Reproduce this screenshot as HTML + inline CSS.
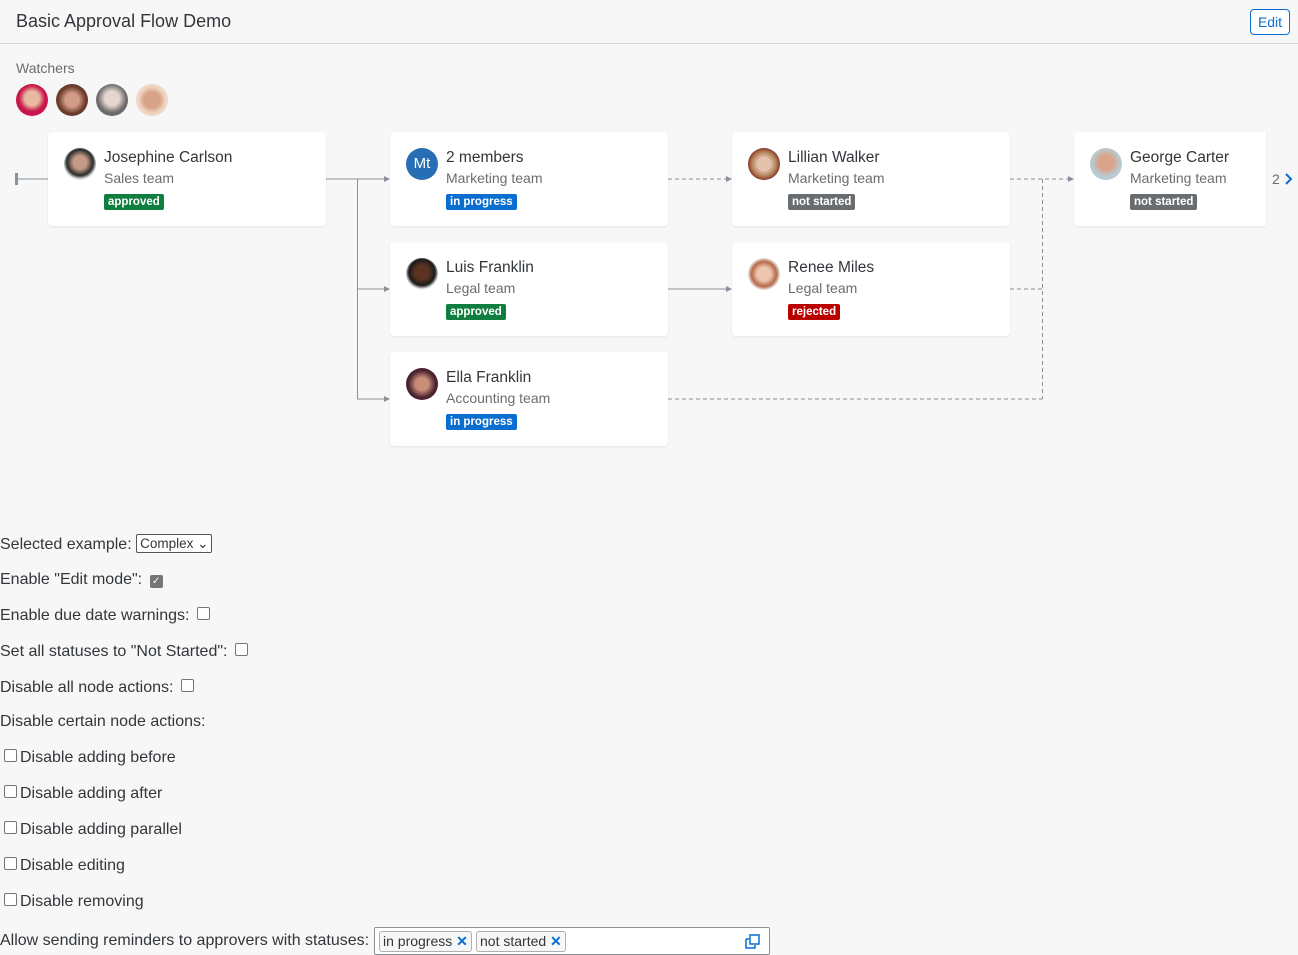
<!DOCTYPE html>
<html><head><meta charset="utf-8"><style>
body{margin:0;width:1298px;height:955px;background:#f7f7f7;font-family:"Liberation Sans",sans-serif;color:#32363a;position:relative;overflow:hidden}
.hdr{position:absolute;left:0;top:0;width:1298px;height:43px;border-bottom:1px solid #d9d9d9}
.title{position:absolute;left:16px;top:11px;font-size:18px;color:#32363a}
.edit{position:absolute;left:1250px;top:9px;width:40px;height:26px;border:1px solid #0a6ed1;border-radius:4px;background:#fff;color:#0a6ed1;font-size:14px;text-align:center;line-height:24px;box-sizing:border-box}
.w{position:absolute;left:16px;top:60px;font-size:14px;color:#6a6d70}
.av{position:absolute;width:32px;height:32px;border-radius:50%}
.card{position:absolute;width:278px;height:94px;background:#fff;border-radius:4px;box-shadow:0 0 1px rgba(0,0,0,.08),0 1px 2px rgba(0,0,0,.06)}
.card .a{position:absolute;left:16px;top:16px;width:32px;height:32px;border-radius:50%}
.card .n{position:absolute;left:56px;top:17px;font-size:15.5px;color:#32363a}
.card .s{position:absolute;left:56px;top:38px;font-size:14px;color:#6a6d70}
.card .b{position:absolute;left:56px;top:62px;font-size:11.5px;font-weight:bold;color:#fff;padding:0 4px;height:16px;line-height:16px;border-radius:2px}
.g{background:#107e3e}.bl{background:#0a6ed1}.gr{background:#6a6d70}.r{background:#bb0000}
.f{position:absolute;left:0;font-size:16px;color:#32363a;white-space:nowrap}
.cb{display:inline-block;width:11px;height:11px;border:1px solid #767676;border-radius:2px;background:#fff;vertical-align:0px;margin-left:4px}
.f .cb.l{margin-left:4px;margin-right:3px}
</style></head><body>
<div class="hdr"><div class="title">Basic Approval Flow Demo</div><div class="edit">Edit</div></div>
<div class="w">Watchers</div>
<div class="av" style="left:16px;top:84px;background:radial-gradient(circle at 50% 45%,#e8b9a0 30%,#c8154a 55%)"></div>
<div class="av" style="left:56px;top:84px;background:radial-gradient(circle at 50% 50%,#d19b86 30%,#6b3c2c 60%)"></div>
<div class="av" style="left:96px;top:84px;background:radial-gradient(circle at 50% 45%,#e6d6cf 30%,#6d6a6b 60%)"></div>
<div class="av" style="left:136px;top:84px;background:radial-gradient(circle at 50% 50%,#d7a387 35%,#f1d6c6 60%)"></div>
<svg style="position:absolute;left:0;top:0" width="1298" height="460">
<g stroke="#89919a" stroke-width="1" fill="none">
<path d="M17 179H48M326 179H384M357.5 179V399M357 289H384M357 399H384M668 289H726"/>
<path stroke-dasharray="4,3" d="M668 179H726M1010 179H1068M1010 289H1042.5M668 399H1042.5M1042.5 179V399"/>
</g>
<g fill="#89919a"><path d="M384 176l6 3-6 3zM384 286l6 3-6 3zM384 396l6 3-6 3zM726 176l6 3-6 3zM726 286l6 3-6 3zM1068 176l6 3-6 3z"/></g>
<rect x="15" y="173" width="3" height="12" fill="#89919a"/>
</svg>
<div class="card" style="left:48px;top:132px"><div class="a" style="background:radial-gradient(circle at 50% 45%,#c59a86 28%,#2a2a2a 55%,#dfe6e4 70%)"></div><div class="n">Josephine Carlson</div><div class="s">Sales team</div><div class="b g">approved</div></div>
<div class="card" style="left:390px;top:132px"><div class="a" style="background:#286eb4;color:#fff;font-size:15px;text-align:center;line-height:32px">Mt</div><div class="n">2 members</div><div class="s">Marketing team</div><div class="b bl">in progress</div></div>
<div class="card" style="left:732px;top:132px"><div class="a" style="background:radial-gradient(circle at 50% 50%,#e4c3ad 28%,#b07d55 55%,#8a3a2c 70%)"></div><div class="n">Lillian Walker</div><div class="s">Marketing team</div><div class="b gr">not started</div></div>
<div class="card" style="left:1074px;top:132px;width:192px;border-radius:4px 0 0 4px"><div class="a" style="background:radial-gradient(circle at 50% 45%,#d9a48a 30%,#b8cbd3 60%)"></div><div class="n">George Carter</div><div class="s">Marketing team</div><div class="b gr">not started</div></div>
<div style="position:absolute;left:1272px;top:171px;font-size:14px;color:#6a6d70">2</div>
<svg style="position:absolute;left:1284px;top:172px" width="10" height="14"><path d="M2 2l5 5-5 5" fill="none" stroke="#0a6ed1" stroke-width="2"/></svg>
<div class="card" style="left:390px;top:242px"><div class="a" style="background:radial-gradient(circle at 50% 45%,#5a3322 30%,#1a1a1a 55%,#f2f2f2 70%)"></div><div class="n">Luis Franklin</div><div class="s">Legal team</div><div class="b g">approved</div></div>
<div class="card" style="left:732px;top:242px"><div class="a" style="background:radial-gradient(circle at 50% 50%,#edc4ad 30%,#b46a4a 55%,#e8e0da 70%)"></div><div class="n">Renee Miles</div><div class="s">Legal team</div><div class="b r">rejected</div></div>
<div class="card" style="left:390px;top:352px"><div class="a" style="background:radial-gradient(circle at 50% 50%,#c98e7a 28%,#4a2230 60%)"></div><div class="n">Ella Franklin</div><div class="s">Accounting team</div><div class="b bl">in progress</div></div>

<div class="f" style="top:534px">Selected example: <span style="display:inline-block;border:1px solid #555;background:#fff;font-size:13.5px;padding:0 3px;height:17px;line-height:17px;border-radius:2px;vertical-align:1px">Complex &#x2304;</span></div>
<div class="f" style="top:571px">Enable "Edit mode": <span class="cb" style="background:#767676;border-color:#767676;color:#fff;font-size:10px;line-height:11px;text-align:center;margin-left:3px">✓</span></div>
<div class="f" style="top:607px">Enable due date warnings: <span class="cb" style="margin-left:3px"></span></div>
<div class="f" style="top:643px">Set all statuses to "Not Started": <span class="cb" style="margin-left:3px"></span></div>
<div class="f" style="top:679px">Disable all node actions: <span class="cb" style="margin-left:3px"></span></div>
<div class="f" style="top:713px">Disable certain node actions:</div>
<div class="f" style="top:749px"><span class="cb l"></span>Disable adding before</div>
<div class="f" style="top:785px"><span class="cb l"></span>Disable adding after</div>
<div class="f" style="top:821px"><span class="cb l"></span>Disable adding parallel</div>
<div class="f" style="top:857px"><span class="cb l"></span>Disable editing</div>
<div class="f" style="top:893px"><span class="cb l"></span>Disable removing</div>
<div class="f" style="top:932px">Allow sending reminders to approvers with statuses:</div>
<div style="position:absolute;left:374px;top:927px;width:396px;height:28px;border:1px solid #89919a;background:#fff;box-sizing:border-box;border-radius:2px">
<span style="position:absolute;left:4px;top:3px;height:19px;border:1px solid #b0b0b0;border-radius:3px;padding:0 3px;font-size:14px;line-height:19px;background:#f7f7f7">in progress <b style="color:#0a6ed1">✕</b></span>
<span style="position:absolute;left:101px;top:3px;height:19px;border:1px solid #b0b0b0;border-radius:3px;padding:0 3px;font-size:14px;line-height:19px;background:#f7f7f7">not started <b style="color:#0a6ed1">✕</b></span>
<svg style="position:absolute;left:370px;top:6px" width="15" height="15"><path d="M1 5h3M1 5v9h9v-3M5 1h9v9H5z" fill="none" stroke="#0a6ed1" stroke-width="1.5"/></svg>
</div>
</body></html>
